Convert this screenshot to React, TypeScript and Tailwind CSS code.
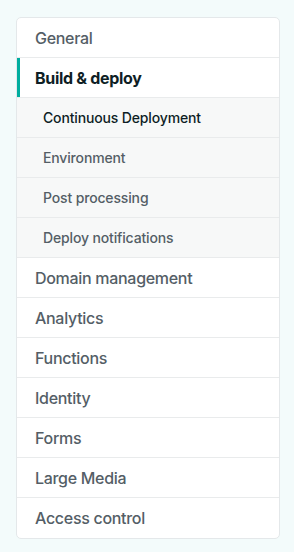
import React from "react";

type Item = { label: string; sub?: boolean; active?: boolean; current?: boolean };

const items: Item[] = [
  { label: "General" },
  { label: "Build & deploy", active: true },
  { label: "Continuous Deployment", sub: true, current: true },
  { label: "Environment", sub: true },
  { label: "Post processing", sub: true },
  { label: "Deploy notifications", sub: true },
  { label: "Domain management" },
  { label: "Analytics" },
  { label: "Functions" },
  { label: "Identity" },
  { label: "Forms" },
  { label: "Large Media" },
  { label: "Access control" },
];

export default function App() {
  return (
    <div
      className="min-h-screen w-[294px] bg-[#f3fbfb] pt-[17px] pl-[16px]"
      style={{ fontFamily: "Inter, 'Liberation Sans', sans-serif" }}
    >
      <nav className="w-[264px] overflow-hidden rounded-[5px] border border-[#e4e8ea] bg-white">
        {items.map((it, i) => {
          const last = i === items.length - 1;
          const base = `relative flex h-[40px] items-center ${last ? "" : "border-b border-[#e9ebec]"}`;
          if (it.sub) {
            return (
              <div key={it.label} className={`${base} bg-[#f7f8f8] pl-[26px] text-[14px] tracking-[-0.15px] font-medium ${it.current ? "text-[#0e1e25]" : "text-[#545e66]"}`}>
                {it.label}
              </div>
            );
          }
          return (
            <div
              key={it.label}
              className={`${base} pl-[18px] text-[16px] tracking-[-0.3px] ${it.active ? "font-bold text-[#0e1e25]" : "font-medium text-[#545e66]"}`}
            >
              {it.active && <span className="absolute left-0 top-0 h-full w-[3px] bg-[#00ad9f]" />}
              {it.label}
            </div>
          );
        })}
      </nav>
    </div>
  );
}
